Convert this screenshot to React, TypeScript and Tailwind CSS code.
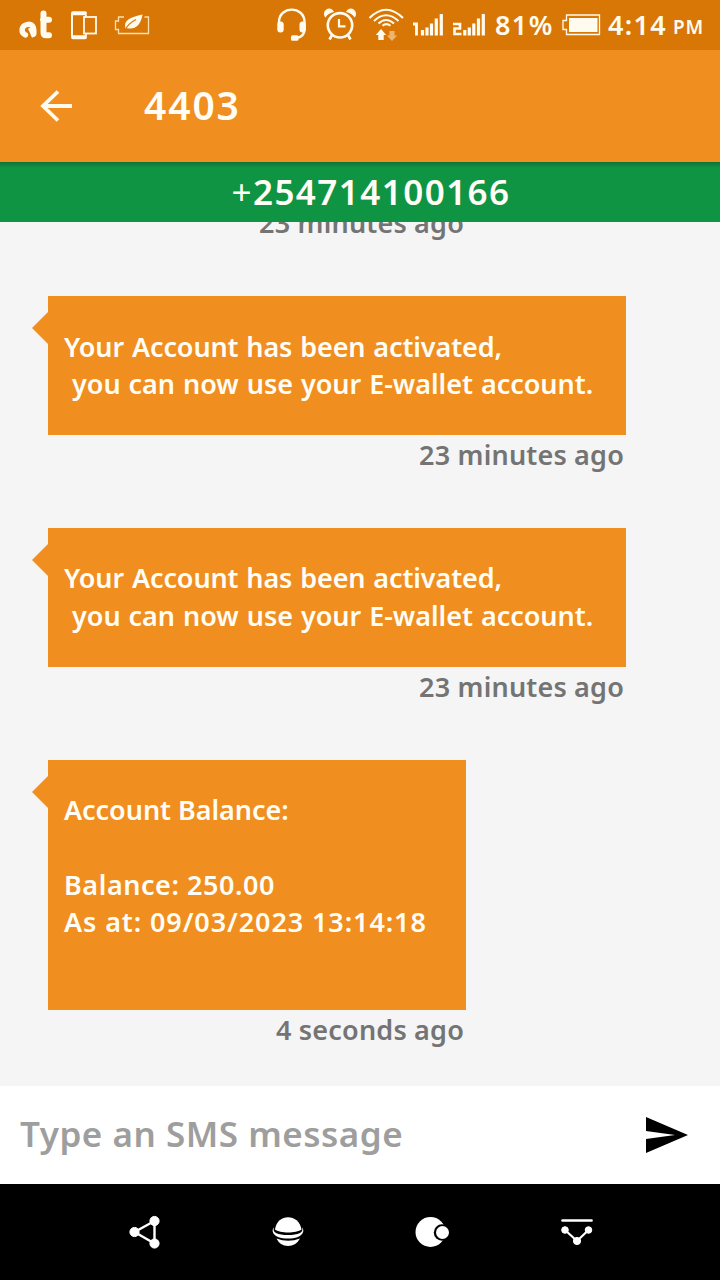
import React from "react";

type Line = { text: string; tracking: string };
type Message = { lines: Line[]; time: string; width: string };

const activated: Line[] = [
  { text: "Your Account has been activated,", tracking: "tracking-[-0.12px] [word-spacing:1px]" },
  { text: " you can now use your E-wallet account.", tracking: "tracking-[-0.03px] [word-spacing:1px]" },
];

const messages: Message[] = [
  { lines: activated, time: "23 minutes ago", width: "w-[578px]" },
  { lines: activated, time: "23 minutes ago", width: "w-[578px]" },
  {
    lines: [
      { text: "Account Balance:", tracking: "tracking-[-0.05px]" },
      { text: "", tracking: "" },
      { text: "Balance: 250.00", tracking: "tracking-[0.55px]" },
      { text: "As at: 09/03/2023 13:14:18", tracking: "tracking-[0.9px]" },
      { text: "", tracking: "" },
    ],
    time: "4 seconds ago",
    width: "w-[418px]",
  },
];

function StatusIcons() {
  return (
    <svg width="488" height="50" viewBox="0 0 488 50" fill="none" stroke="#fffbef" className="shrink-0">
      {/* carrier mark */}
      <g strokeLinejoin="round">
        <path d="M25.500 35C20.500 33 21 26 27 24.500C31.500 23.200 34.500 26 33.800 34" strokeWidth="5.400" strokeLinecap="round" />
        <path d="M43.500 13.500V32.500Q43.500 35.300 46 35.300H49M43 19.700H49" strokeWidth="6" strokeLinecap="round" />
        <path d="M29.500 28L33.500 37" strokeWidth="3.200" />
      </g>
      {/* phone and tablet */}
      <path d="M86 17V15M86 33.500V36" strokeWidth="1.800" />
      <path d="M72 14V36.500" strokeWidth="2" />
      <path d="M73 13.200H85M73 37.200H85" strokeWidth="4" strokeLinecap="round" />
      <rect x="84" y="17" width="12" height="16.500" strokeWidth="1.800" />
      {/* power saver */}
      <path d="M124 17H118.500V21H115.500V29.500H118.500V33.500H148.500V17H144.500" strokeWidth="1.300" stroke="#fbe0b2" />
      <path d="M125.500 28.500C123 20 130 17.500 142.500 14.500C141 25 135 30 127.500 28.200Z" fill="#fffbef" stroke="none" />
      <path d="M125 31C126.500 26 130 22.500 136 19.500" stroke="#d87705" strokeWidth="1.300" />
      {/* headset */}
      <path d="M279 26V22C279 5.500 304.500 5.500 304.500 22V29Q304.500 36.500 297 38" strokeWidth="2.400" />
      <rect x="277.300" y="21.500" width="6.400" height="11" rx="3" fill="#fffbef" stroke="none" />
      <rect x="299.500" y="21.500" width="6.400" height="11" rx="3" fill="#fffbef" stroke="none" />
      <rect x="291" y="35.300" width="7.500" height="5.500" rx="1.500" fill="#fffbef" stroke="none" />
      {/* alarm clock */}
      <circle cx="340" cy="25.300" r="12.200" strokeWidth="2.600" />
      <path d="M339 19V26.300H345.500" strokeWidth="2.200" />
      <path d="M332 35L329.500 39.500M348 35L350.500 39.500" strokeWidth="2.600" />
      <path d="M325.500 17.500A5.200 5.200 0 1 1 334 12Q328 13 325.500 17.500ZM354.500 17.500A5.200 5.200 0 1 0 346 12Q352 13 354.500 17.500Z" fill="#fffbef" stroke="none" />
      {/* wifi */}
      <path d="M369.500 18Q386 1.500 403 18M374 21Q386 9.500 398.500 21M378.500 23.500Q386 16.500 394 23.500" strokeWidth="2.100" />
      <path d="M382.500 25.800Q386.300 22.500 390.500 25.800" strokeWidth="2" />
      <path d="M381 29L386.200 35H383.700V40H378.300V35H375.800Z" fill="#fffbef" stroke="none" />
      <path d="M392 41L397.200 35.500H394.500V31H389.500V35.500H386.800Z" fill="#eeb571" stroke="none" />
      {/* SIM 1 signal */}
      <path d="M413 24H416.500V35.500" strokeWidth="2.800" />
      <path d="M422.500 30V35.500M427 27.500V35.500M431.500 23.500V35.500M436.300 18.500V35.500M441.300 14V35.500" strokeWidth="3.200" />
      {/* SIM 2 signal */}
      <path d="M453 24H460V28.500H454.500V34H461.500" strokeWidth="2.600" />
      <path d="M464.800 30V35.500M469.300 27.500V35.500M473.800 23.500V35.500M478.500 18.500V35.500M483.300 14V35.500" strokeWidth="3.200" />
    </svg>
  );
}

function Bubble({ lines, time, width }: Message) {
  return (
    <div className={`${width} flex shrink-0 flex-col`}>
      <div className="relative bg-[#f08e1f] px-4 pb-[32.500px] pt-[31.500px] text-[27px] font-semibold leading-[37.3px] text-[#fffdf5]">
        <svg className="absolute -left-4 top-4" width="16" height="32" viewBox="0 0 16 32">
          <path d="M16 0V32L0 16Z" fill="#f08e1f" />
        </svg>
        {lines.map((line, i) => (
          <div key={i} className={`h-[37.3px] whitespace-pre ${line.tracking}`}>
            <span>{line.text}</span>
          </div>
        ))}
      </div>
      <Time>{time}</Time>
    </div>
  );
}

function Time({ children }: { children: React.ReactNode }) {
  return (
    <div className="flex h-[93.400px] shrink-0 justify-end whitespace-nowrap pr-[2px] pt-[1px] text-[27px] font-semibold leading-[37.3px] tracking-[0.18px] text-[#747474]">
      <span>{children}</span>
    </div>
  );
}

export default function App() {
  return (
    <div className="flex h-[1280px] w-[720px] flex-col overflow-hidden bg-[#f5f5f5] font-['Noto_Sans',sans-serif]">
      <div className="flex h-[50px] shrink-0 items-center bg-[#d87705] text-[#fffbef]">
        <StatusIcons />
        <span className="ml-[7px] w-[60px] whitespace-nowrap pb-px text-[27px] font-semibold leading-[49px] tracking-[1.4px]">81%</span>
        <svg className="ml-[6px] shrink-0" width="40" height="50" viewBox="0 0 40 50" fill="none">
          <path d="M5.500 15H38.500V34.500H5.500V29.500H2V20.500H5.500Z" stroke="#fffbef" strokeWidth="1.300" />
          <rect x="8" y="18" width="28.500" height="14" fill="#fffbef" />
        </svg>
        <span className="ml-[7px] w-[60px] whitespace-nowrap pb-px text-[27px] font-semibold leading-[49px] tracking-[1.3px]">4:14</span>
        <span className="ml-[5px] whitespace-nowrap pt-[4px] text-[19px] font-semibold leading-[50px] tracking-[0.7px]">PM</span>
      </div>

      <header className="flex h-[112px] shrink-0 items-center bg-[#f08e1f] pl-10">
        <svg width="32" height="32" viewBox="0 0 32 32" fill="none" stroke="#fffbef" strokeWidth="3.800">
          <path d="M18 1.500L3 16L18 30.500M3 16H32" />
        </svg>
        <h1 className="ml-[72px] pb-[2px] text-[39px] font-semibold tracking-[1.9px] text-[#fffdf5]"><span>4403</span></h1>
      </header>

      <div className="flex h-[60px] shrink-0 justify-center bg-[#0f9444] bg-linear-to-b from-[#0b7535] from-0% to-[#0f9444] to-[6px] pl-[22px] text-[35px] font-semibold leading-[60px] tracking-[1.45px] text-[#fffdf5]">
        <span><span className="font-normal">+</span>254714100166</span>
      </div>

      <main className="flex h-[864px] shrink-0 flex-col justify-start overflow-hidden pl-12">
        <div className="-mt-[19.400px] w-[418px] shrink-0"><Time>23 minutes ago</Time></div>
        {messages.map((m, i) => (
          <Bubble key={i} {...m} />
        ))}
      </main>

      <div className="flex h-[98px] shrink-0 items-center justify-between bg-white pl-5 pr-8">
        <span className="pb-[2px] text-[35px] font-semibold tracking-[0.52px] text-[#9e9e9e]">Type an SMS message</span>
        <svg width="42" height="36" viewBox="0 0 42 36">
          <path d="M0 0L42 18L0 36V22L29 18L0 14Z" fill="#000" />
        </svg>
      </div>

      <nav className="flex h-24 shrink-0 items-center bg-black pl-[129px]">
        <svg width="32" height="34" viewBox="0 0 32 34" fill="#fff" stroke="#fff">
          <path d="M5.500 17L25.500 6V28.500Z" fill="none" strokeWidth="2.400" />
          <circle cx="5.500" cy="17" r="4.600" /><circle cx="25.500" cy="6" r="4.600" /><circle cx="25.500" cy="28.500" r="4.600" />
        </svg>
        <svg className="ml-[110px]" width="34" height="32" viewBox="0 0 34 32" fill="#fff">
          <path d="M4 13.500C6 -3 28 -3 30.500 13.500C25 17.500 9 17.500 4 13.500Z" />
          <path d="M3 11.500C0 14 1 22.500 17 22.500S34 14 31 11.500C33 17 27 19 17 19S1 17 3 11.500Z" />
          <path d="M5.500 22.500Q17 27 29 22.500Q25 30 17 30T5.500 22.500Z" />
        </svg>
        <svg className="ml-[110px]" width="34" height="32" viewBox="0 0 34 32">
          <circle cx="15.500" cy="16" r="15" fill="#fff" /><circle cx="27" cy="16.500" r="8.200" /><circle cx="27.500" cy="16.500" r="6.500" fill="#fff" />
        </svg>
        <svg className="ml-[112px]" width="32" height="32" viewBox="0 0 32 32" fill="#fff" stroke="#fff">
          <path d="M1.500 4.500H30.500" strokeWidth="2.600" strokeLinecap="round" />
          <path d="M4 14L16 25L27.500 14" fill="none" strokeWidth="2.200" />
          <circle cx="4" cy="14" r="3.300" /><circle cx="27.500" cy="14" r="3.300" /><circle cx="16" cy="25" r="3.600" />
        </svg>
      </nav>
    </div>
  );
}
